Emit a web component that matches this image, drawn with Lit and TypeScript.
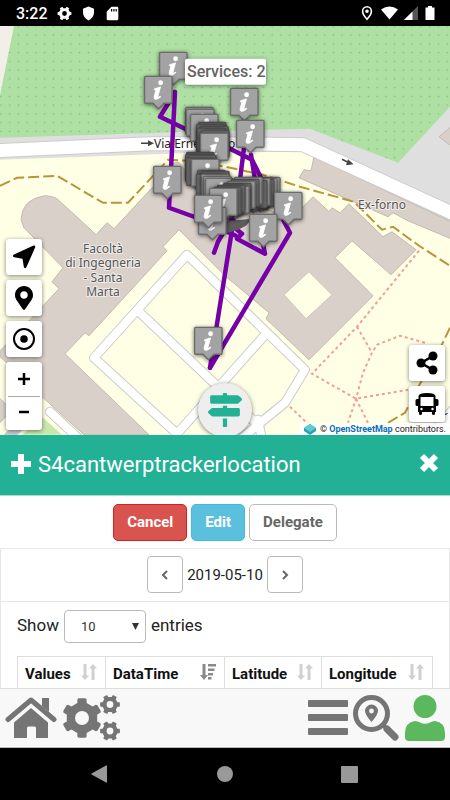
import { LitElement, html, svg, css } from "lit";
import { customElement, property, state } from "lit/decorators.js";

/** Outline of a cog wheel with a round hole, centred on (cx, cy). */
function gear(cx: number, cy: number, outer: number, hole: number, teeth: number, turn = 0): string {
  const root = outer * 0.78;
  const step = (Math.PI * 2) / teeth;
  const pts: string[] = [];
  for (let i = 0; i < teeth; i++) {
    const mid = turn + i * step - Math.PI / 2;
    const corners: [number, number][] = [
      [-0.29, root],
      [-0.23, outer * 0.96],
      [-0.16, outer],
      [0.16, outer],
      [0.23, outer * 0.96],
      [0.29, root],
    ];
    for (const [part, r] of corners) {
      const a = mid + part * step;
      pts.push(`${(cx + r * Math.cos(a)).toFixed(2)} ${(cy + r * Math.sin(a)).toFixed(2)}`);
    }
  }
  return (
    `M${pts.join("L")}Z` +
    `M${cx - hole} ${cy}a${hole} ${hole} 0 1 0 ${hole * 2} 0a${hole} ${hole} 0 1 0 ${-hole * 2} 0Z`
  );
}

type Marker = [x: number, y: number, crowded?: boolean];

/* Top left corner of each marker, northernmost first so southern ones overlap them.
   Crowded markers lie in the shadow of their neighbours. */
const MARKERS: Marker[] = [
  [159, 52], [144, 76], [230, 88], [185, 107], [186, 109], [190, 114],
  [236, 120], [198, 122, true], [196, 124, true], [200, 126, true], [197, 128, true], [201, 130, true], [200, 133],
  [186, 152, true], [185, 154, true], [188, 155, true], [186, 158, true], [191, 159],
  [153, 166], [197, 170, true], [201, 171, true], [196, 174, true], [201, 174], [203, 176], [205, 178],
  [252, 177], [249, 178], [246, 179, true], [242, 178], [239, 180, true], [234, 177], [231, 179, true],
  [227, 181], [223, 183, true], [221, 186], [217, 185, true], [213, 187, true], [209, 188],
  [274, 192], [198, 207], [249, 214], [194, 195], [194, 327],
];

const TRACKS = [
  "M175 92 169 208 194 217 236 236",
  "M168 104 160 117 185 129 200 134 252 160 264 184 290 233 210 368",
  "M244 148 240 180 210 368",
  "M251 155 256 186 228 225 218 242 214 253",
  "M232 226 242 234 237 239 265 254 263 244",
];

const DASHED_TRAILS = [
  "M0 186 17 178 57 176 103 203 128 203 168 160 190 161 225 167 263 175 300 187 354 202 382 230 393 227 419 246 450 266",
  "M450 328 438 353 420 384 405 413 388 423 360 435",
];

const FOOTPATHS = [
  "M419 251 357 327 312 374 356 399 408 390",
  "M357 327 372 353",
  "M425 343 400 336 377 345 372 353 363 373 356 399 348 423",
  "M356 399 368 423",
  "M290 407 312 428",
];

const GARDEN_WALKS =
  "M177 434 94 358 187 255 305 370 285 403 258 425 240 440M139 312 258 425M267 333 177 434M258 420 262 440";

@customElement("city-map")
export class CityMap extends LitElement {
  static styles = css`
    :host {
      display: block;
    }
    svg {
      display: block;
      width: 100%;
      height: 100%;
    }
    .building {
      fill: #d9d0c9;
      stroke: #c5b9ae;
      stroke-width: 1;
    }
    .lawn {
      fill: #ffffe5;
      stroke: #d0c6b8;
      stroke-width: 1;
    }
    .casing {
      fill: none;
      stroke: #ccc;
      stroke-linejoin: round;
      stroke-linecap: round;
    }
    .surface {
      fill: none;
      stroke: #fff;
      stroke-linejoin: round;
      stroke-linecap: round;
    }
    .trail {
      fill: none;
      stroke: #b8943c;
      stroke-width: 2;
      stroke-dasharray: 11 4;
    }
    .footpath {
      fill: none;
      stroke: #fa9b93;
      stroke-width: 2;
      stroke-dasharray: 3 3;
    }
    .track {
      fill: none;
      stroke: #7600a8;
      stroke-width: 4.5;
      stroke-linejoin: round;
      stroke-linecap: round;
    }
    .place {
      font: 12px "Noto Sans", sans-serif;
      fill: #555;
      stroke: #fff;
      stroke-opacity: 0.6;
      stroke-width: 2;
      paint-order: stroke;
    }
    .street {
      font: 12px "Noto Sans", sans-serif;
      fill: #222;
    }
    .tip {
      fill: #fff;
      filter: drop-shadow(0 1px 2px rgba(0, 0, 0, 0.45));
    }
    .tip-text {
      font: 500 16px Roboto, sans-serif;
      fill: #636363;
    }
    .marker {
      filter: drop-shadow(0 1px 2px rgba(0, 0, 0, 0.55));
    }
    .marker-box {
      fill: #a3a3a3;
      stroke: #6c6c6c;
      stroke-width: 1.3;
    }
    .crowded .marker-box {
      fill: #6a6a6a;
      stroke: #525252;
    }
  `;

  private marker([x, y, crowded]: Marker) {
    return svg`<g class=${crowded ? "marker crowded" : "marker"} transform="translate(${x} ${y})">
      <path class="marker-box" d="M1.600 .6H27Q28 .6 28 1.600V26.500Q28 27.500 27 27.500H20L14.500 33 9 27.500H1.600Q.6 27.500 .6 26.500V1.600Q.6 .6 1.600 .6Z"/>
      ${
        crowded
          ? null
          : svg`<circle cx="16.600" cy="7" r="2.400" fill="#fff"/>
      <path d="M10.500 13 16.500 11.200 13.900 20.800Q13.800 22 16.400 20.300L16.800 20.900Q13.800 24 11.200 23.600 9.600 23.200 10.200 20.800L11.900 14.300 10.400 14Z" fill="#fff" stroke="#fff" stroke-width=".8"/>`
      }
    </g>`;
  }

  render() {
    return html`<svg viewBox="0 26 450 409" preserveAspectRatio="xMidYMid slice" role="img" aria-label="Map">
      <defs>
        <pattern id="dots" x="14" y="31" width="8.750" height="8.750" patternUnits="userSpaceOnUse">
          <circle cx="4.400" cy="4.400" r=".8" fill="#7fb977" />
        </pattern>
      </defs>
      <rect y="26" width="450" height="409" fill="#ffffe5" />
      <path d="M0 26H14L0 95Z" fill="#f2efe9" />
      <path d="M0 137 150 133 308 127 450 90V222L308 152 225 152 0 160Z" fill="#dfdfdf" />
      <path d="M14 26H450V107L398 163 310 129 225 131 0 138V95Z" fill="#aedfa3" />
      <path d="M14 26H450V107L398 163 310 129 225 131 0 138V95Z" fill="url(#dots)" />
      <path class="building" d="M451 127 439 137 451 146Z" />
      <path class="building" d="M314 157 311 171 304 170 299 178 388 217 393 213 408 221 451 239V222Z" />
      <path
        class="building"
        d="M21 220Q22 199 45 196 52 196 57 199L80 220 96 235 107 223 114 229 167 172Q177 155 183 168L200 185 290 218 303 207 313 197 329 212 332 208 340 213 349 204 383 237 392 232 416 250 391 275 352 241 335 258 373 296 309 360 266 319 269 313 225 276 179 230 163 247 167 251 89 336 85 333 65 354 149 435H84L42 397 20 375 0 357V351L30 320 59 289 52 282 63 268 24 228Z"
      />
      <path class="lawn" d="M309 272 332 295 306 319 284 295Z" />
      <path class="building" d="M-1 398 12 410 -1 424Z" />
      <path d="M43 418 62 435H22Z" fill="#c8e8ae" />
      <g>
        <path class="casing" stroke-width="10" d="M50 412 80 440M0 446 30 415" />
        <path class="surface" stroke-width="8" d="M50 412 80 440" />
        <path class="casing" stroke-width="10" d=${GARDEN_WALKS} />
        <path class="surface" stroke-width="8" d=${GARDEN_WALKS} />
        <path class="casing" stroke-width="15" d="M-8 151 150 144 225 144 303 145 460 217" />
        <path class="surface" stroke-width="13" d="M-8 151 150 144 225 144 303 145 460 217" />
        <path class="casing" stroke-width="15" d="M425 445 458 408" />
        <path class="surface" stroke-width="13" d="M425 445 458 408" />
      </g>
      ${DASHED_TRAILS.map((d) => svg`<path class="trail" d=${d}/>`)}
      ${FOOTPATHS.map((d) => svg`<path class="footpath" d=${d}/>`)}
      <path d="M141 143.500H150M342 159.500 349 163" stroke="#444" stroke-width="1.500" />
      <path d="M148 140.500 154 143.500 148 146.500ZM348 159.500 353.500 164.500 346 165.500Z" fill="#444" />
      <text class="street" x="154" y="148">Via Ernesto Ro</text>
      <text class="street" transform="translate(440 422) rotate(-48)">nt</text>
      <text class="place" x="358" y="209">Ex-forno</text>
      <text class="place" text-anchor="middle" y="253"><tspan x="103">Facoltà</tspan><tspan x="103" dy="14">di Ingegneria</tspan><tspan x="103" dy="15">- Santa</tspan><tspan x="103" dy="14">Marta</tspan></text>
      ${TRACKS.map((d) => svg`<path class="track" d=${d}/>`)}
      <path d="M212 228 220 222 252 219 246 226 238 230 228 233 220 231Z" fill="#5c5c5c" />
      ${MARKERS.map((m) => this.marker(m))}
      <rect class="tip" x="185" y="59" width="81" height="26" rx="2" />
      <text class="tip-text" x="187" y="77">Services: 2</text>
    </svg>`;
  }
}

interface Column {
  name: string;
  sorted: boolean;
}

@customElement("app-root")
export class AppRoot extends LitElement {
  @property() heading = "S4cantwerptrackerlocation";
  @state() private day = "2019-05-10";
  @state() private columns: Column[] = [
    { name: "Values", sorted: false },
    { name: "DataTime", sorted: true },
    { name: "Latitude", sorted: false },
    { name: "Longitude", sorted: false },
  ];

  static styles = css`
    :host {
      display: flex;
      flex-direction: column;
      min-height: 100vh;
      background: #fff;
      color: #222;
      font-family: Roboto, sans-serif;
    }
    * {
      box-sizing: border-box;
    }
    button {
      display: flex;
      align-items: center;
      justify-content: center;
      margin: 0;
      padding: 0;
      border: 0;
      background: none;
      font: inherit;
      color: inherit;
    }
    svg {
      display: block;
      flex: none;
    }

    .status {
      display: flex;
      align-items: center;
      height: 26px;
      padding: 0 14px 0 16px;
      gap: 9px;
      background: #000;
      color: #fff;
      font-size: 16px;
      font-weight: 500;
    }
    .status-end {
      display: flex;
      align-items: center;
      gap: 6px;
      margin-left: auto;
    }

    .map {
      position: relative;
      flex: 1 1 300px;
      display: flex;
      overflow: hidden;
    }
    city-map {
      flex: 1;
      min-width: 0;
    }
    .controls {
      position: absolute;
      display: flex;
      flex-direction: column;
      gap: 5px;
    }
    .controls-left {
      left: 6px;
      bottom: 5px;
    }
    .controls-right {
      right: 5px;
      bottom: 13px;
    }
    .control,
    .zoom {
      width: 36px;
      border-radius: 3px;
      background: #fff;
      color: #000;
      box-shadow: 0 1px 4px rgba(0, 0, 0, 0.5);
    }
    .control {
      height: 36px;
    }
    .zoom {
      padding: 0 2px;
    }
    .zoom button {
      width: 100%;
      height: 34px;
    }
    .zoom button + button {
      border-top: 1px solid #aaa;
    }
    .routes {
      position: absolute;
      left: 50%;
      bottom: -2px;
      width: 54px;
      height: 54px;
      margin-left: -27px;
      border-radius: 50%;
      background: #eee;
      color: #23b196;
      box-shadow: 0 1px 4px rgba(0, 0, 0, 0.5);
    }
    .credit {
      position: absolute;
      right: 0;
      bottom: 0;
      display: flex;
      align-items: center;
      gap: 4px;
      height: 12px;
      padding: 0 4px 0 6px;
      border-radius: 4px 0 0 0;
      background: rgba(255, 255, 255, 0.85);
      color: #222;
      font-size: 9px;
      white-space: nowrap;
    }
    .credit a {
      color: #0b6fb8;
      font-weight: 700;
      text-decoration: none;
    }

    .heading {
      display: flex;
      align-items: center;
      height: 61px;
      padding: 0 11px;
      gap: 7px;
      border-bottom: 1px solid #a5dccf;
      background: #23b196;
      color: #fff;
    }
    .heading h1 {
      flex: 1;
      min-width: 0;
      margin: 0;
      font-size: 22px;
      font-weight: 400;
    }
    .close,
    .plus {
      align-self: flex-start;
      margin-top: 18px;
    }
    .actions {
      display: flex;
      justify-content: center;
      gap: 4px;
      padding: 8px 0 7px;
    }
    .action {
      height: 37px;
      padding: 0 13px;
      border: 1px solid #bbb;
      border-radius: 5px;
      font-size: 15px;
      font-weight: 700;
    }
    .cancel {
      border-color: #d3211f;
      background: #d9534f;
      color: #fff;
    }
    .edit {
      border-color: #46b8da;
      background: #5bc0de;
      color: #fff;
    }
    .delegate {
      color: #666;
    }
    .box {
      border: 1px solid #e7e7e7;
      border-bottom: 0;
    }
    .day {
      display: flex;
      align-items: center;
      justify-content: center;
      gap: 4px;
      height: 53px;
      border-bottom: 1px solid #e7e7e7;
      font-size: 15px;
    }
    .step {
      width: 36px;
      height: 37px;
      border: 1px solid #bbb;
      border-radius: 4px;
      color: #666;
    }
    .length {
      display: flex;
      align-items: center;
      gap: 5px;
      padding: 8px 16px 0;
      font-size: 17px;
    }
    .length label,
    .length .suffix {
      padding-bottom: 2px;
    }
    .picker {
      position: relative;
      display: flex;
      align-items: center;
    }
    .picker select {
      width: 82px;
      height: 33px;
      padding: 0 0 0 16px;
      border: 1px solid #bbb;
      border-radius: 4px;
      background: #fff;
      color: #333;
      font: 13px Roboto, sans-serif;
      appearance: none;
    }
    .picker svg {
      position: absolute;
      right: 7px;
      color: #333;
      pointer-events: none;
    }
    .rows {
      padding: 13px 16px 0;
    }
    table {
      width: 100%;
      border-collapse: collapse;
      font-size: 15px;
    }
    th {
      height: 32px;
      padding: 3px 7px 0;
      border: 1px solid #ddd;
      border-bottom: 0;
      color: #111;
      font-weight: 700;
      text-align: left;
    }
    .col-0 {
      width: 88px;
    }
    .col-1 {
      width: 119px;
    }
    .col-2 {
      width: 97px;
    }
    .th-inner {
      display: flex;
      align-items: center;
      justify-content: space-between;
    }
    .sort {
      margin: 0 1px 4px 0;
      color: #d0d0d0;
    }
    .sorted {
      color: #8a8a8a;
    }

    .toolbar {
      display: flex;
      align-items: center;
      height: 60px;
      padding: 0 4px 0 5px;
      gap: 5px;
      border-top: 1px solid #ddd;
      border-bottom: 1px solid #bbb;
      background: #f8f8f8;
      color: #757575;
    }
    .spacer {
      flex: 1;
    }
    .user {
      color: #5cb85c;
    }
    .system {
      display: flex;
      align-items: center;
      justify-content: space-between;
      height: 52px;
      padding: 0 92px 0 91px;
      background: #000;
      color: #999;
    }
  `;

  private sortIcon(sorted: boolean) {
    return sorted
      ? html`<svg class="sort sorted" width="16" height="18" viewBox="0 0 16 18" fill="currentColor">
          <path d="M2.500 1H5.500V12H8L4 17 0 12H2.500ZM8 1H16V3.500H8ZM8 5.500H14.500V8H8ZM8 10H13V12.500H8ZM8 14H11.500V16.500H8Z" />
        </svg>`
      : html`<svg class="sort" width="16" height="18" viewBox="0 0 16 18" fill="currentColor">
          <path d="M2.500 1H5.500V12.500H8L4 17 0 12.500H2.500ZM10.500 17H13.500V5.500H16L12 1 8 5.500H10.500Z" />
        </svg>`;
  }

  private statusBar() {
    return html`<header class="status">
      <span>3:22</span>
      <svg width="15" height="15" viewBox="0 0 15 15" fill="#fff" fill-rule="evenodd">
        <path d=${gear(7.5, 7.5, 7, 2.4, 6, Math.PI / 6)} />
      </svg>
      <svg width="15" height="15" viewBox="0 0 15 15" fill="#fff">
        <path d="M7.500 .6 13 2.800V7Q12.500 12 7.500 14.400 2.500 12 2 7V2.800Z" />
      </svg>
      <svg width="15" height="15" viewBox="0 0 15 15" fill="#fff" fill-rule="evenodd">
        <path d="M6.500 .8H12Q13.300 .8 13.300 2V13Q13.300 14.200 12 14.200H3Q1.700 14.200 1.700 13V5.500ZM6 3V5.500H7.200V3ZM8.300 3V5.500H9.500V3ZM10.600 3V5.500H11.800V3Z" />
      </svg>
      <span class="status-end">
        <svg width="16" height="16" viewBox="0 0 16 16" fill="none" stroke="#fff" stroke-width="1.600">
          <path d="M8 14.300Q3.600 9.500 3.600 6.200A4.400 4.400 0 0 1 12.400 6.200Q12.400 9.500 8 14.300Z" />
          <circle cx="8" cy="6.200" r="1" fill="#fff" />
        </svg>
        <svg width="17" height="14" viewBox="0 0 17 14" fill="#fff"><path d="M0 3.500Q8.500-2.500 17 3.500L8.500 13.500Z" /></svg>
        <svg width="14" height="14" viewBox="0 0 14 14">
          <path d="M14 0V14H0Z" fill="#555" />
          <path d="M8.500 5.500V14H0Z" fill="#fff" />
        </svg>
        <svg width="12" height="16" viewBox="2 0 12 16" fill="#fff">
          <path d="M6 1H10V2.500H12.500V15H3.500V2.500H6Z" />
        </svg>
      </span>
    </header>`;
  }

  private mapArea() {
    return html`<section class="map">
      <city-map></city-map>
      <div class="controls controls-left">
        <button class="control" aria-label="My position">
          <svg width="24" height="24" viewBox="0 0 24 24" fill="currentColor">
            <path d="M21.500 .6Q23.600 .2 23.200 2.300L14.500 22Q12.600 24.500 11.800 21.800L10.500 13.800 2.300 12.300Q-.4 11.500 2 9.500Z" />
          </svg>
        </button>
        <button class="control" aria-label="Pin">
          <svg width="18" height="24" viewBox="0 0 384 512" fill="currentColor">
            <path d="M172.300 501.700C27 291 0 269.400 0 192 0 86 86 0 192 0s192 86 192 192c0 77.400-27 99-172.300 309.700-9.500 13.800-29.900 13.800-39.400 0zM192 272c44.200 0 80-35.800 80-80s-35.800-80-80-80-80 35.800-80 80 35.800 80 80 80z" />
          </svg>
        </button>
        <button class="control" aria-label="Target">
          <svg width="24" height="24" viewBox="0 0 24 24">
            <circle cx="12" cy="12" r="10" fill="none" stroke="#000" stroke-width="2" />
            <circle cx="12" cy="12" r="3.800" />
          </svg>
        </button>
        <div class="zoom">
          <button aria-label="Zoom in">
            <svg width="12" height="12" viewBox="0 0 12 12"><path d="M6 0V12M0 6H12" stroke="#000" stroke-width="2.500" /></svg>
          </button>
          <button aria-label="Zoom out">
            <svg width="12" height="12" viewBox="0 0 12 12"><path d="M1 5H11" stroke="#000" stroke-width="2.500" /></svg>
          </button>
        </div>
      </div>
      <div class="controls controls-right">
        <button class="control" aria-label="Share">
          <svg width="22" height="24" viewBox="0 0 22 24" fill="currentColor">
            <path d="M17 5 5 12 17 19" fill="none" stroke="#000" stroke-width="2.600" />
            <circle cx="17" cy="5" r="4.500" />
            <circle cx="5" cy="12" r="4.500" />
            <circle cx="17" cy="19" r="4.500" />
          </svg>
        </button>
        <button class="control" aria-label="Bus">
          <svg width="24" height="24" viewBox="0 0 24 24" fill="currentColor" fill-rule="evenodd">
            <path
              d="M12 1Q20 1 20.500 4V7H22Q23.500 7 23.500 8.500V12.500Q23.500 14 22 14H21V20H20V21.500Q20 23 18.500 23T17 21.500V20H7V21.500Q7 23 5.500 23T4 21.500V20H3V14H2Q.5 14 .5 12.500V8.500Q.5 7 2 7H3.500V4Q4 1 12 1ZM5.500 5V14H18.500V5ZM6.500 15.800A1.200 1.200 0 1 0 6.500 18.200 1.200 1.200 0 1 0 6.500 15.800ZM17.500 15.800A1.200 1.200 0 1 0 17.500 18.200 1.200 1.200 0 1 0 17.500 15.800Z"
            />
          </svg>
        </button>
      </div>
      <button class="routes" aria-label="Routes">
        <svg width="34" height="34" viewBox="0 0 512 512" fill="currentColor">
          <path
            d="M507.310 84.690L464 41.370c-6-6-14.140-9.370-22.630-9.370H288V16c0-8.840-7.160-16-16-16h-32c-8.840 0-16 7.160-16 16v16H56c-13.250 0-24 10.750-24 24v80c0 13.250 10.750 24 24 24h385.370c8.490 0 16.620-3.370 22.630-9.370l43.310-43.310c6.250-6.260 6.250-16.380 0-22.630zM224 496c0 8.840 7.160 16 16 16h32c8.840 0 16-7.160 16-16V384h-64v112zm232-272H288v-32h-64v32H70.630c-8.490 0-16.620 3.370-22.630 9.370L4.690 276.690c-6.250 6.250-6.250 16.380 0 22.630L48 342.630c6 6 14.140 9.370 22.630 9.370H456c13.250 0 24-10.750 24-24v-80c0-13.250-10.750-24-24-24z"
          />
        </svg>
      </button>
      <div class="credit">
        <svg width="12" height="12" viewBox="0 0 12 12">
          <path d="M6 1 12 5V8L6 12 0 8V5Z" fill="#2e9fac" />
          <path d="M6 1 12 5 6 9 0 5Z" fill="#5ecbd3" />
        </svg>
        <span>© <a href="#">OpenStreetMap</a> contributors.</span>
      </div>
    </section>`;
  }

  private panel() {
    return html`<main>
      <div class="heading">
        <svg class="plus" width="20" height="22" viewBox="0 0 20 22"><path d="M10 1V21M0 11H20" stroke="#fff" stroke-width="6" /></svg>
        <h1>${this.heading}</h1>
        <button class="close" aria-label="Close">
          <svg width="20" height="20" viewBox="0 0 20 20"><path d="M3 3 17 17M17 3 3 17" stroke="#fff" stroke-width="6" /></svg>
        </button>
      </div>
      <div class="actions">
        <button class="action cancel">Cancel</button>
        <button class="action edit">Edit</button>
        <button class="action delegate">Delegate</button>
      </div>
      <div class="box">
        <div class="day">
          <button class="step" aria-label="Previous day">
            <svg width="8" height="12" viewBox="0 0 8 12" fill="none" stroke="currentColor" stroke-width="2"><path d="M6 2 2 6 6 10" /></svg>
          </button>
          <span>${this.day}</span>
          <button class="step" aria-label="Next day">
            <svg width="8" height="12" viewBox="0 0 8 12" fill="none" stroke="currentColor" stroke-width="2"><path d="M2 2 6 6 2 10" /></svg>
          </button>
        </div>
        <div class="length">
          <label for="length">Show</label>
          <span class="picker">
            <select id="length">
              <option>10</option>
              <option>25</option>
              <option>50</option>
            </select>
            <svg width="7" height="7" viewBox="0 0 7 7" fill="currentColor"><path d="M0 0H7L3.500 7Z" /></svg>
          </span>
          <span class="suffix">entries</span>
        </div>
        <div class="rows">
          <table>
            <thead>
              <tr>
                ${this.columns.map(
                  (c, i) => html`<th class="col-${i}" scope="col">
                    <span class="th-inner">${c.name}${this.sortIcon(c.sorted)}</span>
                  </th>`
                )}
              </tr>
            </thead>
          </table>
        </div>
      </div>
    </main>`;
  }

  private toolbar() {
    return html`<nav class="toolbar">
      <button aria-label="Home">
        <svg width="52" height="46" viewBox="0 0 52 46" fill="currentColor">
          <path d="M3 24.500 26 5 49 24.500" fill="none" stroke="currentColor" stroke-width="5" stroke-linecap="round" stroke-linejoin="round" />
          <path d="M37 3H44V17L37 11ZM26 13 43 27.500V43H31V33Q31 31.500 29.500 31.500H23.500Q22 31.500 22 33V43H9V27.500Z" />
        </svg>
      </button>
      <button aria-label="Settings">
        <svg width="60" height="48" viewBox="0 0 60 48" fill="currentColor" fill-rule="evenodd">
          <path d=${gear(20, 24, 20, 7, 6)} />
          <path d=${gear(48, 10.5, 10, 3.4, 6, Math.PI / 6)} />
          <path d=${gear(48, 37, 10, 3.4, 6, Math.PI / 6)} />
        </svg>
      </button>
      <span class="spacer"></span>
      <button aria-label="Menu">
        <svg width="40" height="36" viewBox="0 0 40 36" fill="currentColor">
          <rect width="40" height="7" rx="1" />
          <rect y="14" width="40" height="7" rx="1" />
          <rect y="28" width="40" height="7" rx="1" />
        </svg>
      </button>
      <button aria-label="Search places">
        <svg width="46" height="46" viewBox="0 0 46 46">
          <circle cx="18.500" cy="18.500" r="16" fill="none" stroke="currentColor" stroke-width="5" />
          <path d="M30 30 34 34" stroke="currentColor" stroke-width="4" />
          <path d="M34 34 42 42" stroke="currentColor" stroke-width="7" stroke-linecap="round" />
          <path
            d="M18.500 27Q12 19.500 12 16A6.500 6.500 0 0 1 25 16Q25 19.500 18.500 27ZM18.500 13.600A2.400 2.400 0 1 0 18.500 18.400 2.400 2.400 0 1 0 18.500 13.600Z"
            fill="currentColor"
            fill-rule="evenodd"
          />
        </svg>
      </button>
      <button class="user" aria-label="Account">
        <svg width="42" height="46" viewBox="0 0 42 46" fill="currentColor">
          <circle cx="21" cy="11.500" r="11.500" />
          <path d="M11 26Q14 26 16 27.500 21 30 26 27.500 28 26 31 26 41 27.500 41 38V42Q41 46 37 46H5Q1 46 1 42V38Q1 27.500 11 26Z" />
        </svg>
      </button>
    </nav>`;
  }

  render() {
    return html`${this.statusBar()}${this.mapArea()}${this.panel()}${this.toolbar()}
      <footer class="system">
        <button aria-label="Back">
          <svg width="17" height="18" viewBox="0 0 17 18" fill="currentColor"><path d="M15 .5Q16 0 16 1V17Q16 18 15 17.500L.5 9.500Q0 9 .5 8.500Z" /></svg>
        </button>
        <button aria-label="Home screen">
          <svg width="16" height="16" viewBox="0 0 16 16" fill="currentColor"><circle cx="8" cy="8" r="8" /></svg>
        </button>
        <button aria-label="Recent apps">
          <svg width="17" height="17" viewBox="0 0 17 17" fill="currentColor"><rect width="17" height="17" rx="1" /></svg>
        </button>
      </footer>`;
  }
}
